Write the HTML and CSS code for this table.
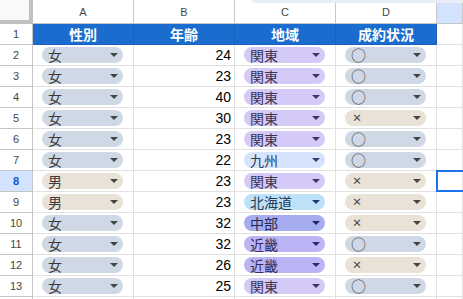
FILE: index.html
```html
<!DOCTYPE html>
<html lang="ja">
<head>
<meta charset="utf-8">
<link rel="stylesheet" href="styles.css">
</head>
<body>
<div class="sheet">
  <div class="topstrip"></div>
  <div class="grid">
    <div class="corner"></div>
    <div class="colh">A</div>
    <div class="colh">B</div>
    <div class="colh">C</div>
    <div class="colh">D</div>
    <div class="colh sel">&nbsp;</div>

    <div class="rowh">1</div>
    <div class="cell th">性別</div>
    <div class="cell th">年齢</div>
    <div class="cell th">地域</div>
    <div class="cell th">成約状況</div>
    <div class="cell"></div>

    <div class="rowh">2</div>
    <div class="cell"><span class="chip c-f"><span class="t">女</span><i class="arr"></i></span></div>
    <div class="cell num">24</div>
    <div class="cell"><span class="chip c-kanto"><span class="t">関東</span><i class="arr"></i></span></div>
    <div class="cell"><span class="chip c-f"><span class="t o">○</span><i class="arr"></i></span></div>
    <div class="cell"></div>

    <div class="rowh">3</div>
    <div class="cell"><span class="chip c-f"><span class="t">女</span><i class="arr"></i></span></div>
    <div class="cell num">23</div>
    <div class="cell"><span class="chip c-kanto"><span class="t">関東</span><i class="arr"></i></span></div>
    <div class="cell"><span class="chip c-f"><span class="t o">○</span><i class="arr"></i></span></div>
    <div class="cell"></div>

    <div class="rowh">4</div>
    <div class="cell"><span class="chip c-f"><span class="t">女</span><i class="arr"></i></span></div>
    <div class="cell num">40</div>
    <div class="cell"><span class="chip c-kanto"><span class="t">関東</span><i class="arr"></i></span></div>
    <div class="cell"><span class="chip c-f"><span class="t o">○</span><i class="arr"></i></span></div>
    <div class="cell"></div>

    <div class="rowh">5</div>
    <div class="cell"><span class="chip c-f"><span class="t">女</span><i class="arr"></i></span></div>
    <div class="cell num">30</div>
    <div class="cell"><span class="chip c-kanto"><span class="t">関東</span><i class="arr"></i></span></div>
    <div class="cell"><span class="chip c-m"><span class="t x">×</span><i class="arr"></i></span></div>
    <div class="cell"></div>

    <div class="rowh">6</div>
    <div class="cell"><span class="chip c-f"><span class="t">女</span><i class="arr"></i></span></div>
    <div class="cell num">23</div>
    <div class="cell"><span class="chip c-kanto"><span class="t">関東</span><i class="arr"></i></span></div>
    <div class="cell"><span class="chip c-f"><span class="t o">○</span><i class="arr"></i></span></div>
    <div class="cell"></div>

    <div class="rowh">7</div>
    <div class="cell"><span class="chip c-f"><span class="t">女</span><i class="arr"></i></span></div>
    <div class="cell num">22</div>
    <div class="cell"><span class="chip c-kyushu"><span class="t">九州</span><i class="arr"></i></span></div>
    <div class="cell"><span class="chip c-f"><span class="t o">○</span><i class="arr"></i></span></div>
    <div class="cell"></div>

    <div class="rowh selrow">8</div>
    <div class="cell"><span class="chip c-m"><span class="t">男</span><i class="arr"></i></span></div>
    <div class="cell num">23</div>
    <div class="cell"><span class="chip c-kanto"><span class="t">関東</span><i class="arr"></i></span></div>
    <div class="cell"><span class="chip c-m"><span class="t x">×</span><i class="arr"></i></span></div>
    <div class="cell active"><div class="selbox"></div></div>

    <div class="rowh">9</div>
    <div class="cell"><span class="chip c-m"><span class="t">男</span><i class="arr"></i></span></div>
    <div class="cell num">23</div>
    <div class="cell"><span class="chip c-hokkaido"><span class="t">北海道</span><i class="arr"></i></span></div>
    <div class="cell"><span class="chip c-m"><span class="t x">×</span><i class="arr"></i></span></div>
    <div class="cell"></div>

    <div class="rowh">10</div>
    <div class="cell"><span class="chip c-f"><span class="t">女</span><i class="arr"></i></span></div>
    <div class="cell num">32</div>
    <div class="cell"><span class="chip c-chubu"><span class="t">中部</span><i class="arr"></i></span></div>
    <div class="cell"><span class="chip c-m"><span class="t x">×</span><i class="arr"></i></span></div>
    <div class="cell"></div>

    <div class="rowh">11</div>
    <div class="cell"><span class="chip c-f"><span class="t">女</span><i class="arr"></i></span></div>
    <div class="cell num">32</div>
    <div class="cell"><span class="chip c-kinki"><span class="t">近畿</span><i class="arr"></i></span></div>
    <div class="cell"><span class="chip c-f"><span class="t o">○</span><i class="arr"></i></span></div>
    <div class="cell"></div>

    <div class="rowh">12</div>
    <div class="cell"><span class="chip c-f"><span class="t">女</span><i class="arr"></i></span></div>
    <div class="cell num">26</div>
    <div class="cell"><span class="chip c-kinki"><span class="t">近畿</span><i class="arr"></i></span></div>
    <div class="cell"><span class="chip c-m"><span class="t x">×</span><i class="arr"></i></span></div>
    <div class="cell"></div>

    <div class="rowh">13</div>
    <div class="cell"><span class="chip c-f"><span class="t">女</span><i class="arr"></i></span></div>
    <div class="cell num">25</div>
    <div class="cell"><span class="chip c-kanto"><span class="t">関東</span><i class="arr"></i></span></div>
    <div class="cell"><span class="chip c-f"><span class="t o">○</span><i class="arr"></i></span></div>
    <div class="cell"></div>

    <div class="rowh"></div>
    <div class="cell"></div>
    <div class="cell"></div>
    <div class="cell"></div>
    <div class="cell"></div>
    <div class="cell"></div>
  </div>
</div>
</body>
</html>
```

FILE: styles.css
```css
* { box-sizing: border-box; }
html, body { margin: 0; padding: 0; background: #fff; }
body { width: 463px; height: 299px; overflow: hidden; font-family: "Liberation Sans", Arial, sans-serif; }

.sheet { position: relative; width: 463px; height: 299px; overflow: hidden; }

.topstrip {
  position: absolute; top: 0; left: 252px; right: 0; height: 3px;
  background: #e9eef6; border-bottom-left-radius: 3px; z-index: 2;
}

.grid {
  display: grid;
  grid-template-columns: 33px 101px 101px 101px 101px 1fr;
  grid-template-rows: 24px;
  grid-auto-rows: 21px;
}

.corner {
  background: #f8f9fa;
  border-right: 4px solid #c0c0c0;
  border-bottom: 4px solid #c0c0c0;
}

.colh {
  display: flex; align-items: center; justify-content: center;
  font-size: 11px; color: #444746;
  border-right: 1px solid #c4c7c5;
  border-bottom: 1px solid #c4c7c5;
  background: #fff;
}
.colh.sel { background: #d3e3fd; }

.rowh {
  display: flex; align-items: center; justify-content: center;
  font-size: 11px; color: #444746;
  border-right: 1px solid #c4c7c5;
  border-bottom: 1px solid #c4c7c5;
  background: #fff;
}
.rowh.selrow { background: #d3e3fd; color: #0b57d0; font-weight: bold; }

.cell {
  position: relative;
  display: flex; align-items: center;
  border-right: 1px solid #e1e1e1;
  border-bottom: 1px solid #e1e1e1;
  padding-left: 9px;
}

.th {
  background: #1a6dcf;
  border-right-color: #1862bb;
  border-bottom-color: #1862bb;
  justify-content: center;
  padding-left: 0;
  color: #fff; font-weight: bold; font-size: 14px;
  font-family: "Noto Sans CJK JP", sans-serif;
}

.num {
  justify-content: flex-end;
  padding-left: 0; padding-right: 3px;
  font-size: 14px; color: #000;
}

.chip {
  display: flex; align-items: center; justify-content: space-between;
  width: 81px; height: 16px; border-radius: 8px;
  padding: 0 5px 0 6px;
  font-family: "Noto Sans CJK JP", sans-serif;
  font-size: 14px; color: #3a3a3a;
}
.chip .t { line-height: 16px; }
.chip .t.o { font-size: 15px; color: #4a4a4a; }
.chip .t.x { font-size: 10px; font-weight: bold; color: #444; padding-left: 1px; }

.arr {
  width: 0; height: 0;
  border-left: 4px solid transparent;
  border-right: 4px solid transparent;
  border-top: 4px solid #444;
}

.c-f { background: #cfd9e6; }
.c-m { background: #e8e2d7; }
.c-kanto { background: #d4c9f7; color: #3a3550; }
.c-kanto .arr { border-top-color: #3b366a; }
.c-kyushu { background: #d6e3fc; color: #2e3a55; }
.c-kyushu .arr { border-top-color: #2f3d6a; }
.c-hokkaido { background: #bee1fa; color: #263c55; }
.c-hokkaido .arr { border-top-color: #1f3a66; }
.c-chubu { background: #a5adf0; color: #26294e; }
.c-chubu .arr { border-top-color: #23275e; }
.c-kinki { background: #bbb5f6; color: #302c55; }
.c-kinki .arr { border-top-color: #2f2a66; }

.selbox {
  position: absolute; top: -1px; left: -1px; right: -10px; bottom: -1px;
  border: 2px solid #1a73e8;
}
```
